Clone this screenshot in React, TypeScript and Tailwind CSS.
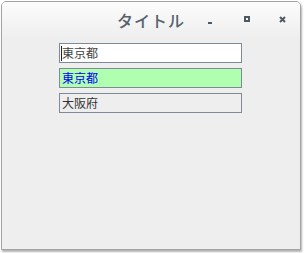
import React from 'react';

const jp = { fontFamily: '"Noto Sans CJK JP", "Noto Sans", sans-serif' };

const Field: React.FC<{ value: string; className: string; caret?: boolean }> = ({ value, className, caret }) => (
  <div className={`relative h-[20px] w-[183px] border border-[#7d8b99] flex items-center pl-[2px] text-[12px] leading-none ${className}`} style={jp}>
    {caret && <span className="absolute left-[1px] top-[2px] h-[15px] w-px bg-[#222]" />}
    <span>{value}</span>
  </div>
);

export default function App() {
  return (
    <div className="w-[304px] h-[253px] bg-white overflow-hidden">
      <div className="ml-[1px] mt-[1px] w-[300px] h-[249px] rounded-t-[5px] border border-[#a3a3a3] bg-[#eeeeee] shadow-[1px_2px_2px_rgba(0,0,0,0.3)] flex flex-col overflow-hidden">
        {/* Title bar */}
        <div className="relative h-[36px] bg-gradient-to-b from-[#fcfcfc] to-[#eeeeee] flex items-center justify-center">
          <span className="text-[16px] font-medium text-[#56616b] tracking-[1px] -mt-[1px]" style={jp}>タイトル</span>
          <div className="absolute left-[206px] top-[20px] h-[2px] w-[4px] bg-[#4d5963]" />
          <div className="absolute left-[242px] top-[14px] h-[6px] w-[6px] border-2 border-[#4d5963]" />
          <svg className="absolute left-[277px] top-[14px]" width="7" height="7" viewBox="0 0 7 7">
            <path d="M1 1 L6 6 M6 1 L1 6" stroke="#4d5963" strokeWidth="2" />
          </svg>
        </div>
        {/* Content */}
        <div className="flex flex-col gap-[5px] pl-[57px] pt-[5px]">
          <Field value="東京都" className="bg-white text-[#444]" caret />
          <Field value="東京都" className="bg-[#b0ffb0] text-[#0000ff]" />
          <Field value="大阪府" className="bg-[#eeeeee] text-[#333]" />
        </div>
      </div>
    </div>
  );
}
